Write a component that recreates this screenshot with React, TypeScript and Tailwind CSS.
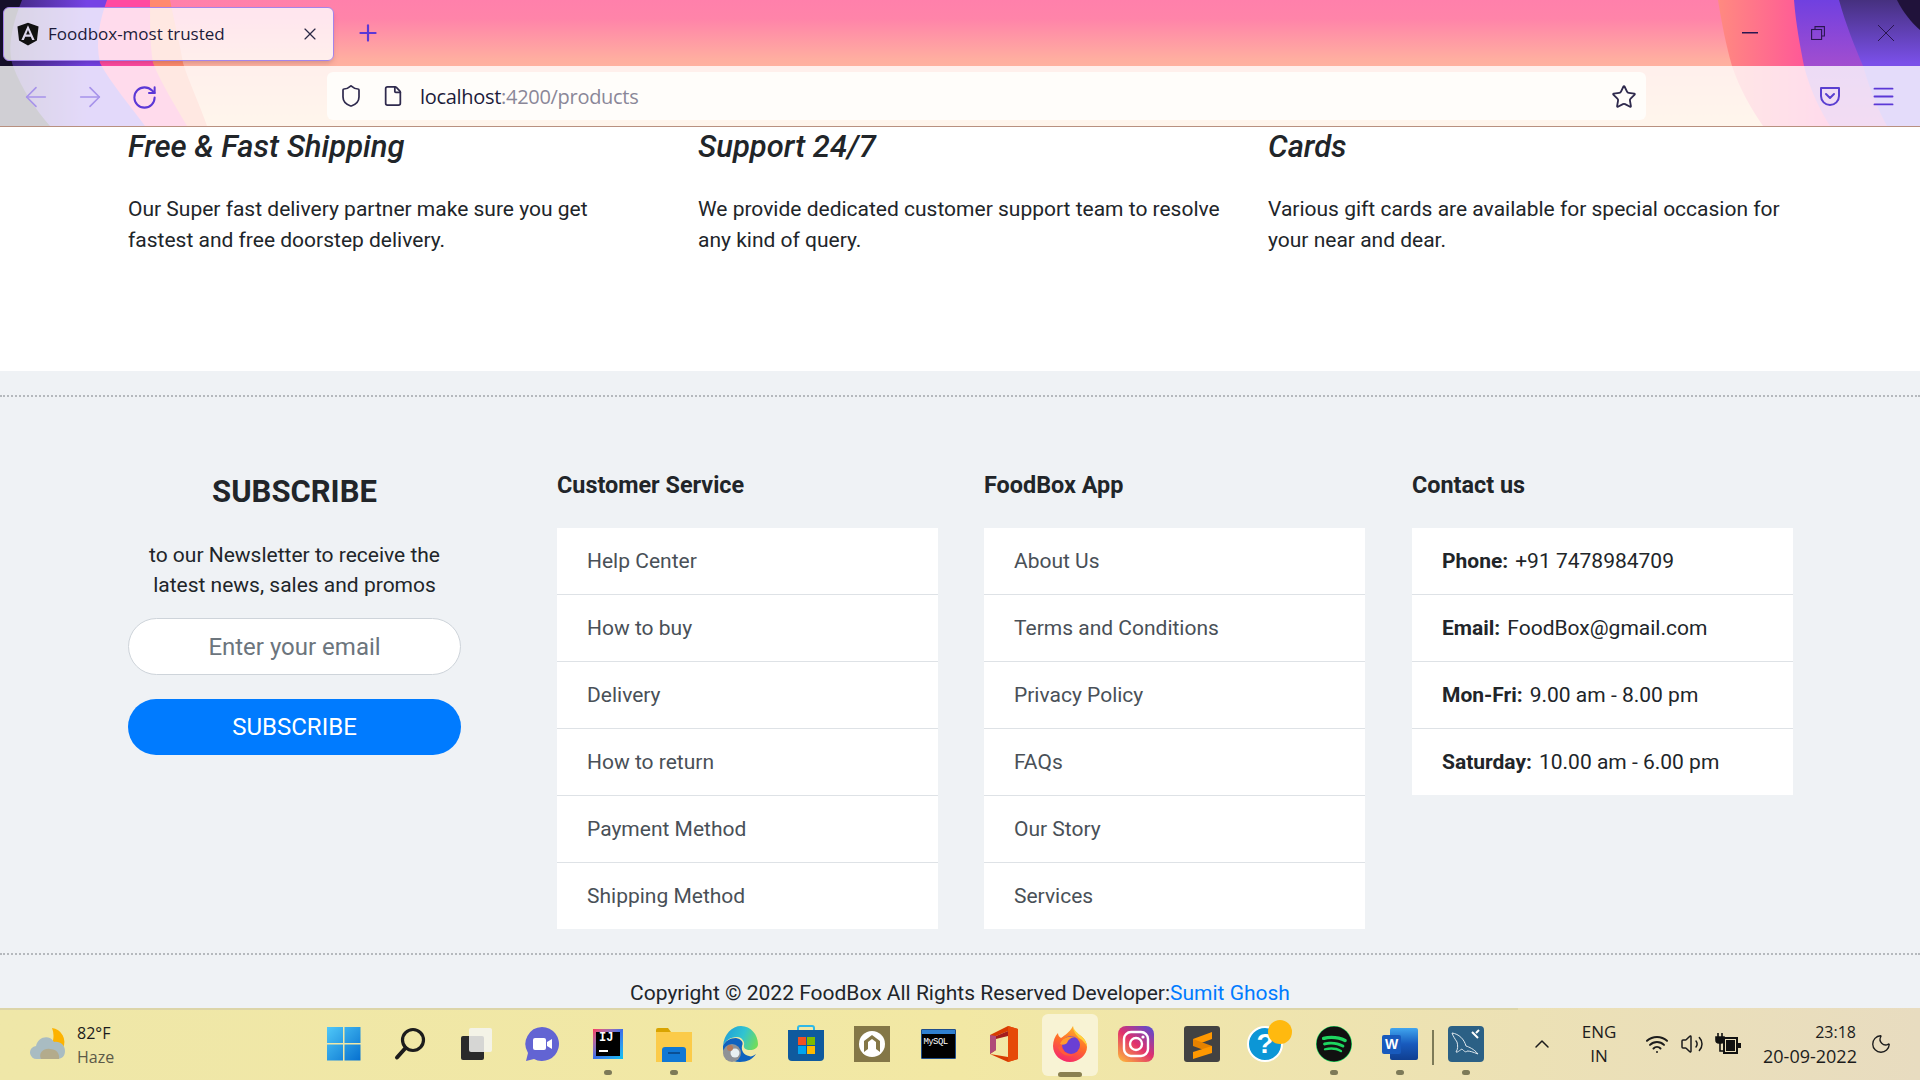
import React from 'react';
import { ArrowLeft, ArrowRight, ChevronUp, File, Menu, Moon, Plus, RotateCw, Shield, Star, Volume2, Wifi, X } from 'lucide-react';
import { FaAngular, FaSpotify } from 'react-icons/fa';

const FEATURES = [
  { title: 'Free & Fast Shipping', text: 'Our Super fast delivery partner make sure you get fastest and free doorstep delivery.' },
  { title: 'Support 24/7', text: 'We provide dedicated customer support team to resolve any kind of query.' },
  { title: 'Cards', text: 'Various gift cards are available for special occasion for your near and dear.' },
];

const CUSTOMER = ['Help Center', 'How to buy', 'Delivery', 'How to return', 'Payment Method', 'Shipping Method'];
const APP = ['About Us', 'Terms and Conditions', 'Privacy Policy', 'FAQs', 'Our Story', 'Services'];
const CONTACT = [
  ['Phone:', '+91 7478984709'],
  ['Email:', 'FoodBox@gmail.com'],
  ['Mon-Fri:', '9.00 am - 8.00 pm'],
  ['Saturday:', '10.00 am - 6.00 pm'],
];

// Theme artwork behind the browser chrome
const ThemeArt = () => (
  <svg className="absolute inset-0 w-[1920px] h-[126px]" viewBox="0 0 1920 126">
    <defs>
      <linearGradient id="sky" x1="0" y1="0" x2="0" y2="1">
        <stop offset="0" stopColor="#ff80ab" />
        <stop offset="0.15" stopColor="#ff84a9" />
        <stop offset="0.47" stopColor="#ffaea0" />
        <stop offset="1" stopColor="#ffd0a0" />
      </linearGradient>
      <linearGradient id="hot" x1="0" y1="0" x2="1" y2="0">
        <stop offset="0" stopColor="#ff8a80" />
        <stop offset="0.55" stopColor="#ff4a9e" />
        <stop offset="1" stopColor="#ff4a9e" />
      </linearGradient>
      <linearGradient id="violet" x1="0" y1="0" x2="0" y2="1">
        <stop offset="0" stopColor="#7040e0" />
        <stop offset="0.5" stopColor="#a04dd0" />
        <stop offset="1" stopColor="#c050c0" />
      </linearGradient>
      <linearGradient id="indigo" x1="0" y1="0" x2="0" y2="1">
        <stop offset="0" stopColor="#46307f" />
        <stop offset="0.5" stopColor="#7a50e8" />
        <stop offset="1" stopColor="#7a50e8" />
      </linearGradient>
      <linearGradient id="leftViolet" x1="0" y1="0" x2="1" y2="0">
        <stop offset="0" stopColor="#3a2470" />
        <stop offset="0.6" stopColor="#7542e5" />
        <stop offset="1" stopColor="#7542e5" />
      </linearGradient>
    </defs>
    <rect width="1920" height="126" fill="url(#sky)" />
    <path d="M0 0H170C175 25 180 45 183 63C190 85 200 105 207 126H0Z" fill="#ff8a6e" />
    <path d="M0 0H150C150 25 150 45 153 63C162 85 175 105 187 126H0Z" fill="#ff4aa0" />
    <path d="M0 0H107C100 20 95 40 100 63C112 85 130 105 145 126H0Z" fill="url(#leftViolet)" />
    <path d="M0 0H22C10 30 8 50 13 66C22 90 36 110 50 126H0Z" fill="#16102a" />
    <path d="M1718 0C1722 25 1726 45 1732 66C1740 90 1752 110 1763 126H1920V0Z" fill="url(#hot)" />
    <path d="M1794 0C1796 25 1800 45 1804 66C1810 90 1820 110 1830 126H1920V0Z" fill="url(#violet)" />
    <path d="M1839 0C1846 25 1854 45 1863 66C1870 90 1878 110 1887 126H1920V0Z" fill="url(#indigo)" />
    <path d="M1897 0C1903 12 1911 22 1920 30V0Z" fill="#20123a" />
  </svg>
);

const PocketIcon = () => (
  <svg width="22" height="20" viewBox="0 0 22 20" fill="none" stroke="#5a3fd0" strokeWidth="2" strokeLinecap="round" strokeLinejoin="round">
    <path d="M2 2h18v8a9 9 0 0 1-18 0Z" />
    <path d="M7 8l4 4 4-4" />
  </svg>
);

const BrowserChrome = () => (
  <header className="relative h-[127px] shrink-0 border-b border-[#b89080]">
    <ThemeArt />
    <div className="relative flex items-center h-[66px] pl-[3px]">
      <div className="flex items-center w-[331px] h-[54px] mt-[1px] rounded-md border border-[#a484ea] bg-white/80 shadow-md pl-[12px] pr-[13px]">
        <FaAngular className="text-[#111] w-[24px] h-[26px]" />
        <span className="ml-[8px] text-[17px] text-[#1c1b3a] font-['Open_Sans',sans-serif] flex-1">Foodbox-most trusted</span>
        <X className="w-[20px] h-[20px] text-[#2a2845]" strokeWidth={1.4} />
      </div>
      <Plus className="ml-[21px] w-[26px] h-[26px] text-[#5b38d6]" strokeWidth={2} />
      <div className="ml-auto flex items-center pr-[26px] gap-[53px] text-[#2a1650]">
        <svg width="16" height="2" viewBox="0 0 16 2"><rect width="16" height="1.500" fill="currentColor" /></svg>
        <svg width="14" height="14" viewBox="0 0 14 14" fill="none" stroke="currentColor" strokeWidth="1.1">
          <path d="M4 3V.6h9.400V10H11" />
          <rect x=".6" y="3.500" width="10" height="10" />
        </svg>
        <svg width="16" height="16" viewBox="0 0 16 16" stroke="currentColor" strokeWidth="1"><path d="M0 0l16 16M16 0L0 16" /></svg>
      </div>
    </div>
    <div className="relative flex items-center h-[60px] bg-white/80">
      <div className="flex items-center w-[327px] pl-[9px] pt-[2px]">
        <div className="w-[54px] flex justify-center"><ArrowLeft className="w-[32px] h-[32px] text-[#a793ea]" strokeWidth={1.2} /></div>
        <div className="w-[54px] flex justify-center"><ArrowRight className="w-[32px] h-[32px] text-[#a793ea]" strokeWidth={1.2} /></div>
        <div className="w-[54px] flex justify-center"><RotateCw className="w-[27px] h-[27px] text-[#5b38d6]" strokeWidth={1.8} /></div>
      </div>
      <div className="flex items-center w-[1319px] h-[48px] rounded-md bg-[#fffdfa] pl-[12px] pr-[9px]">
        <Shield className="w-[24px] h-[26px] text-[#2f2a4d]" strokeWidth={1.7} />
        <File className="ml-[19px] w-[22px] h-[24px] text-[#2f2a4d]" strokeWidth={1.9} />
        <span className="ml-[16px] pt-[1px] text-[20px] text-[#1c1b3a] font-['Open_Sans',sans-serif] tracking-[-0.3px] flex-1">
          localhost<span className="text-[#8a8798]">:4200/products</span>
        </span>
        <Star className="w-[26px] h-[26px] mt-[2px] text-[#2f2a4d]" strokeWidth={1.7} />
      </div>
      <div className="ml-auto flex items-center pr-[23px] gap-[29px]">
        <PocketIcon />
        <Menu className="w-[27px] h-[27px] text-[#5b38d6]" strokeWidth={1.7} />
      </div>
    </div>
  </header>
);

const LinkList = ({ title, items }: { title: string; items: string[] }) => (
  <div className="w-[381px]">
    <h3 className="h-[59px] pt-[1px] text-[23.4px] leading-[30px] font-bold text-[#212529]">{title}</h3>
    <ul className="bg-white">
      {items.map((item, i) => (
        <li key={item} className={`flex items-center px-[30px] pt-[2px] text-[21px] text-[#495057] ${i > 0 ? 'h-[67px] border-t border-[#dee2e6]' : 'h-[66px]'}`}>
          {item}
        </li>
      ))}
    </ul>
  </div>
);

const PageContent = () => (
  <main className="flex-1 overflow-hidden bg-white font-['Roboto',sans-serif]">
    <section className="h-[244px] flex pl-[128px] pt-[3px]">
      {FEATURES.map((f) => (
        <div key={f.title} className="w-[570px] pr-[45px]">
          <h4 className="text-[31px] leading-[34px] italic font-medium text-[#212529]">{f.title}</h4>
          <p className="mt-[30px] text-[21px] leading-[30.500px] text-[#212529]">{f.text}</p>
        </div>
      ))}
    </section>
    <footer className="h-[637px] bg-[#eff2f5] pt-[24px]">
      <div className="border-t-2 border-dotted border-[#b5b9bd] h-[558px] pt-[72px] pl-[128px] flex">
        <div className="w-[333px] mr-[96px] text-center text-[#212529]">
          <h2 className="text-[31px] leading-[36px] font-bold mt-[5px]">SUBSCRIBE</h2>
          <p className="mt-[30px] text-[21px] leading-[30px]">to our Newsletter to receive the latest news, sales and promos</p>
          <div className="mt-[18px] h-[57px] rounded-full border border-[#ced4da] bg-white flex items-center justify-center text-[24px] text-[#6c757d]">
            Enter your email
          </div>
          <button className="mt-[24px] w-full h-[56px] rounded-full bg-[#007bff] text-white text-[24px]">SUBSCRIBE</button>
        </div>
        <div className="flex gap-[46px]">
          <LinkList title="Customer Service" items={CUSTOMER} />
          <LinkList title="FoodBox App" items={APP} />
          <div className="w-[381px] ml-[1px]">
            <h3 className="h-[59px] pt-[1px] text-[23.4px] leading-[30px] font-bold text-[#212529]">Contact us</h3>
            <ul className="bg-white">
              {CONTACT.map(([label, value], i) => (
                <li key={label} className={`flex items-center gap-[7px] px-[30px] pt-[2px] text-[21px] text-[#212529] ${i > 0 ? 'h-[67px] border-t border-[#dee2e6]' : 'h-[66px]'}`}>
                  <b>{label}</b>
                  <span>{value}</span>
                </li>
              ))}
            </ul>
          </div>
        </div>
      </div>
      <div className="border-t-2 border-dotted border-[#b5b9bd] pt-[23px] text-center text-[21px] leading-[30px] text-[#212529]">
        Copyright © 2022 FoodBox All Rights Reserved Developer:<span className="text-[#007bff]">Sumit Ghosh</span>
      </div>
    </footer>
  </main>
);

const WeatherIcon = () => (
  <svg width="36" height="32" viewBox="0 0 36 32">
    <path d="M22 0A14 14 0 0 1 33 20L22 16C24 10 24 5 22 0Z" fill="#fdb300" />
    <path d="M7 31a6.500 6.500 0 0 1-1-13C8 9 19 6 24 14c6-1 11 3 11 9s-4 8-8 8Z" fill="#a9bcc2" />
    <path d="M11 31c-3-6 3-11 9-10 6 0 10 4 9 10Z" fill="#b3ab8c" />
  </svg>
);

const WindowsIcon = () => (
  <svg width="36" height="36" viewBox="0 0 36 36">
    <defs>
      <linearGradient id="win" x1="0" y1="0" x2="1" y2="1">
        <stop offset="0" stopColor="#4fc8f8" />
        <stop offset="1" stopColor="#0670cf" />
      </linearGradient>
    </defs>
    <path d="M1 1h16v16H1zM18.5 1h16v16h-16zM1 18.500h16v16H1zM18.500 18.500h16v16h-16z" fill="url(#win)" />
  </svg>
);

const SearchIcon = () => (
  <svg width="34" height="34" viewBox="0 0 34 34" fill="none" stroke="#1c1c1c" strokeWidth="3.2" strokeLinecap="round">
    <circle cx="20" cy="13" r="10.500" />
    <path d="M12.500 21L4 30.500" strokeWidth="4" />
  </svg>
);

const TaskViewIcon = () => (
  <svg width="34" height="34" viewBox="0 0 34 34">
    <rect x="2" y="9" width="23" height="24" rx="2" fill="#2a2a2a" />
    <rect x="10" y="1" width="23" height="24" rx="2" fill="#f4f4f2" fillOpacity="0.85" />
  </svg>
);

const ChatIcon = () => (
  <svg width="36" height="36" viewBox="0 0 36 36">
    <path d="M18 1a17 17 0 1 1-8 32l-8 2 2-8A17 17 0 0 1 18 1Z" fill="#6264d3" />
    <rect x="9" y="12" width="13" height="12" rx="2" fill="#fff" />
    <path d="M23 16l5-3v10l-5-3Z" fill="#fff" />
  </svg>
);

const IntellijIcon = () => (
  <div className="w-[30px] h-[30px] bg-gradient-to-br from-[#fe315d] via-[#3b6fe8] to-[#07c3f2] p-[3px]">
    <div className="w-full h-full bg-black text-white text-[12px] leading-[13px] font-bold font-['Liberation_Mono',monospace] pl-[3px]">
      IJ
      <div className="w-[9px] h-[1.5px] bg-white mt-[5px]" />
    </div>
  </div>
);

const FolderIcon = () => (
  <svg width="36" height="36" viewBox="0 0 36 36">
    <path d="M0 4a2 2 0 0 1 2-2h10l3 4H0Z" fill="#d9a400" />
    <path d="M0 6h36v30H0Z" fill="#fbcb4a" />
    <path d="M6 24a3 3 0 0 1 3-3h18a3 3 0 0 1 3 3v12H6Z" fill="#1178d4" />
    <rect x="12" y="26" width="12" height="2" fill="#0a4f94" />
  </svg>
);

const EdgeIcon = () => (
  <svg width="36" height="36" viewBox="0 0 36 36">
    <defs>
      <linearGradient id="edge" x1="0" y1="0.3" x2="1" y2="0.6">
        <stop offset="0" stopColor="#1f9fd8" />
        <stop offset="0.55" stopColor="#31c4d0" />
        <stop offset="1" stopColor="#6fdc5c" />
      </linearGradient>
    </defs>
    <path d="M1 20C2 8 10 0 19 0C29 0 36 9 36 18C36 22 32 24 28 24C24 24 21 22 22 19C23 16 20 11 15 11C8 11 3 15 1 20Z" fill="url(#edge)" />
    <path d="M1 20C3 15 8 12 14 12C19 13 22 16 20 20C19 25 22 29 27 30C29 31 31 30 34 28C31 33 25 36 18 36C8 36 0 29 1 20Z" fill="#0f62bf" />
    <circle cx="10" cy="27" r="9" fill="#8f9296" />
    <circle cx="13" cy="27" r="4.500" fill="#e8f0f2" />
    <circle cx="8" cy="22" r="3" fill="#b57a5c" />
  </svg>
);

const StoreIcon = () => (
  <svg width="36" height="38" viewBox="0 0 36 38">
    <path d="M10 7V3a2 2 0 0 1 2-2h12a2 2 0 0 1 2 2v4" fill="none" stroke="#2fb9e8" strokeWidth="2" />
    <path d="M0 5h36v27a4 4 0 0 1-4 4H4a4 4 0 0 1-4-4Z" fill="#0f5a9e" />
    <rect x="10" y="12" width="8" height="8" fill="#f25022" />
    <rect x="19" y="12" width="8" height="8" fill="#7fba00" />
    <rect x="10" y="21" width="8" height="8" fill="#00a4ef" />
    <rect x="19" y="21" width="8" height="8" fill="#ffb900" />
  </svg>
);

const ArchIcon = () => (
  <svg width="36" height="36" viewBox="0 0 36 36">
    <rect width="36" height="36" fill="#847747" />
    <circle cx="18" cy="18" r="13" fill="#fff" />
    <path d="M10 26V15l8-6 8 6v11l-8-6Z" fill="#847747" />
    <path d="M14 24v-8l4-3 4 3v8l-4-3Z" fill="#fff" />
  </svg>
);

const MysqlConsole = () => (
  <div className="w-[35px] h-[30px] border border-[#1f4e8c] bg-black rounded-[1px] overflow-hidden">
    <div className="h-[4px] bg-[#2f80d0]" />
    <div className="text-[9px] leading-[16px] text-white pl-[2px] font-['Liberation_Mono',monospace] tracking-[-0.6px]">MySQL</div>
  </div>
);

const OfficeIcon = () => (
  <svg width="28" height="36" viewBox="0 0 28 36">
    <path d="M0 9L18 0l10 3v30l-10 3L0 28l18 3V5L6 10v14L0 28Z" fill="#d83b01" />
    <path d="M18 0l10 3v30l-10 3Z" fill="#e64a08" />
    <path d="M0 9l6 1v14l-6 4Z" fill="#b04a78" />
    <path d="M6 10L18 5v5l-12 3Z" fill="#a51c1c" />
  </svg>
);

const FirefoxIcon = () => (
  <svg width="34" height="36" viewBox="0 0 34 36">
    <defs>
      <linearGradient id="fx" x1="0.7" y1="0" x2="0.3" y2="1">
        <stop offset="0" stopColor="#ffb52e" />
        <stop offset="0.5" stopColor="#ff6a2a" />
        <stop offset="1" stopColor="#f5256f" />
      </linearGradient>
    </defs>
    <path d="M20 0C20 5 24 7 28 10C33 14 34 18 34 21C34 29 26 36 17 36C8 36 0 29 0 20C0 15 2 10 5 7C5 9 6 11 8 12C12 9 16 7 20 0Z" fill="url(#fx)" />
    <path d="M20 0C21 5 25 7 28 10C33 14 34 18 34 21C33 18 30 14 26 12C23 9 20 5 20 0Z" fill="#ffd23a" />
    <circle cx="18" cy="19" r="9" fill="#6a3fd4" />
    <path d="M7 18C9 12 16 9 23 11C18 11 15 14 14 17C12 19 9 19 7 18Z" fill="#ff9a2e" />
    <path d="M5 21C7 29 16 32 23 28C17 30 10 27 8 20Z" fill="#ff5a3a" />
  </svg>
);

const InstagramIcon = () => (
  <svg width="36" height="36" viewBox="0 0 36 36">
    <defs>
      <linearGradient id="ig" x1="0.1" y1="1" x2="0.9" y2="0">
        <stop offset="0" stopColor="#fdb33c" />
        <stop offset="0.5" stopColor="#e1306c" />
        <stop offset="1" stopColor="#5b4bd0" />
      </linearGradient>
    </defs>
    <rect width="36" height="36" rx="8" fill="url(#ig)" />
    <rect x="6" y="6" width="24" height="24" rx="7" fill="none" stroke="#fff" strokeWidth="2.4" />
    <circle cx="18" cy="18" r="6" fill="none" stroke="#fff" strokeWidth="2.4" />
    <circle cx="25" cy="11" r="1.600" fill="#fff" />
  </svg>
);

const SublimeIcon = () => (
  <svg width="36" height="36" viewBox="0 0 36 36">
    <rect width="36" height="36" rx="3" fill="#424242" />
    <path d="M28 6v7L9 20v-7Z" fill="#ff9800" />
    <path d="M9 13l19 7v7L9 20Z" fill="#e68200" />
    <path d="M28 20v7L9 33v-7Z" fill="#ff9800" />
  </svg>
);

const HelpIcon = () => (
  <div className="relative w-[36px] h-[36px] -translate-x-[3px]">
    <div className="w-[36px] h-[36px] rounded-full bg-[#0c96d6] border-[2px] border-white flex items-center justify-center text-white text-[28px] font-bold font-['Liberation_Sans',sans-serif]">?</div>
    <div className="absolute -top-[6px] left-[21px] w-[24px] h-[24px] rounded-full bg-[#ffb90f]" />
  </div>
);

const WordIcon = () => (
  <div className="relative w-[36px] h-[32px]">
    <div className="absolute right-0 top-0 w-[28px] h-[32px] rounded-[2px] bg-gradient-to-b from-[#41a5ee] via-[#185abd] to-[#103f91]" />
    <div className="absolute left-0 top-[7px] w-[19px] h-[19px] rounded-[2px] bg-[#185abd] text-white text-[14px] leading-[19px] font-bold text-center font-['Liberation_Sans',sans-serif]">W</div>
  </div>
);

const WorkbenchIcon = () => (
  <svg width="36" height="36" viewBox="0 0 36 36" fill="none">
    <rect width="36" height="36" rx="4" fill="#2b6085" />
    <path d="M4 7c7 1 12 6 14 13 3 1 8 3 12 8-5-2-8-3-11-3-1 2-3 0-5-2-2 1-5 4-6 3 2-3 2-6 1-10-2-3-4-6-5-9Z" stroke="#dfe8ee" strokeWidth="1" />
    <path d="M24 6l6 6M31 4l-3 3" stroke="#fff" strokeWidth="2" />
  </svg>
);

const BatteryIcon = () => (
  <svg width="26" height="24" viewBox="0 0 26 24" fill="none">
    <path d="M3 1v4M7 1v4M1 5h8v3a3 3 0 0 1-3 3H4a3 3 0 0 1-3-3Z" stroke="#111" strokeWidth="1.600" fill="#111" />
    <path d="M5 11v8h5" stroke="#111" strokeWidth="1.600" />
    <rect x="9" y="6" width="13" height="15" stroke="#111" strokeWidth="2" />
    <rect x="11" y="8" width="9" height="11" fill="#111" />
    <rect x="23" y="11" width="3" height="5" fill="#111" />
  </svg>
);

const DOCK: { key: string; icon: React.ReactNode; open?: boolean }[] = [
  { key: 'start', icon: <WindowsIcon /> },
  { key: 'search', icon: <SearchIcon /> },
  { key: 'tasks', icon: <TaskViewIcon /> },
  { key: 'chat', icon: <ChatIcon /> },
  { key: 'idea', icon: <IntellijIcon />, open: true },
  { key: 'files', icon: <FolderIcon />, open: true },
  { key: 'edge', icon: <EdgeIcon /> },
  { key: 'store', icon: <StoreIcon /> },
  { key: 'arch', icon: <ArchIcon /> },
  { key: 'mysql', icon: <MysqlConsole /> },
  { key: 'office', icon: <OfficeIcon /> },
  { key: 'firefox', icon: <FirefoxIcon /> },
  { key: 'instagram', icon: <InstagramIcon /> },
  { key: 'sublime', icon: <SublimeIcon /> },
  { key: 'help', icon: <HelpIcon /> },
  { key: 'spotify', icon: <FaSpotify className="w-[36px] h-[36px] text-[#111] bg-[#1ed760] rounded-full" />, open: true },
  { key: 'word', icon: <WordIcon />, open: true },
  { key: 'workbench', icon: <WorkbenchIcon />, open: true },
];

const Taskbar = () => (
  <div className="relative h-[72px] shrink-0 flex items-center font-['Open_Sans',sans-serif] text-[#1c1c1c] bg-gradient-to-r from-[#efe7a8] via-[#f2e8a4] to-[#e8dcc0]">
    <div className="absolute left-0 top-0 w-[1518px] h-[2px] bg-[#dcd5a8]" />
    <div className="w-[311px] flex items-center pl-[30px] shrink-0">
      <WeatherIcon />
      <div className="ml-[11px] pt-[2px] text-[16px] leading-[24.500px]">
        <div>82°F</div>
        <div className="text-[#5c5a48]">Haze</div>
      </div>
    </div>
    <div className="flex h-full">
      {DOCK.map((d) => (
        <div key={d.key} className="relative w-[66px] h-full flex items-center justify-center">
          {d.key === 'firefox' && <div className="absolute left-[5px] top-[6px] w-[56px] h-[62px] rounded-md bg-[#f8f3d4]" />}
          <div className="relative">{d.icon}</div>
          {d.open && <div className="absolute bottom-[5px] left-[29px] w-[8px] h-[5px] rounded-full bg-[#7d7a58]" />}
          {d.key === 'firefox' && <div className="absolute bottom-[3px] left-[21px] w-[24px] h-[5px] rounded-full bg-[#8a8050]" />}
          {d.key === 'word' && <div className="absolute right-[-1px] top-[22px] w-[2px] h-[35px] bg-[#7d7a58]" />}
        </div>
      ))}
    </div>
    <div className="flex items-center flex-1 pl-[31px]">
      <ChevronUp className="w-[24px] h-[24px]" strokeWidth={1.5} />
      <div className="ml-[17px] w-[56px] text-center text-[17px] leading-[24px]">
        <div>ENG</div>
        <div>IN</div>
      </div>
      <Wifi className="ml-[18px] w-[24px] h-[24px]" strokeWidth={2} />
      <Volume2 className="ml-[11px] w-[24px] h-[24px]" strokeWidth={1.5} />
      <div className="ml-[11px]">
        <BatteryIcon />
      </div>
      <div className="ml-[22px] w-[93px] text-right leading-[24px] whitespace-nowrap">
        <div className="text-[16px]">23:18</div>
        <div className="text-[18px]">20-09-2022</div>
      </div>
      <Moon className="ml-[14px] w-[22px] h-[22px]" strokeWidth={1.5} />
    </div>
  </div>
);

export default function App() {
  return (
    <div className="w-[1920px] h-[1080px] overflow-hidden flex flex-col">
      <BrowserChrome />
      <PageContent />
      <Taskbar />
    </div>
  );
}
